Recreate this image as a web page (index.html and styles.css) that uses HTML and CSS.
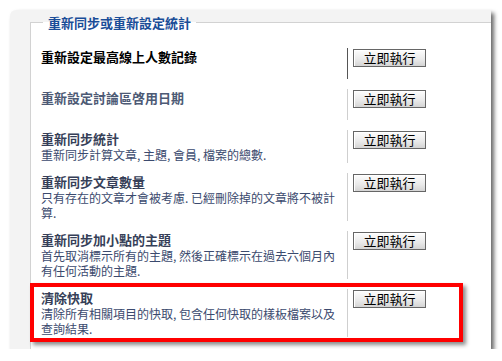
FILE: index.html
```html
<!DOCTYPE html>
<html lang="zh-Hant">
<head>
  <meta charset="UTF-8" />
  <meta name="viewport" content="width=device-width, initial-scale=1.0"/>
  <title>重新同步或重新設定統計</title>
  <link rel="stylesheet" href="styles.css">
</head>

<body>
  <div class="panel">
    <fieldset class="stats">
      <legend>重新同步或重新設定統計</legend>

      <div class="stat-row active">
        <div class="stat-info">
          <div class="stat-title">重新設定最高線上人數記錄</div>
          <div class="stat-desc"></div>
        </div>
        <div class="stat-action"><button class="run-btn">立即執行</button></div>
      </div>

      <div class="stat-row">
        <div class="stat-info">
          <div class="stat-title light">重新設定討論區啓用日期</div>
          <div class="stat-desc"></div>
        </div>
        <div class="stat-action"><button class="run-btn">立即執行</button></div>
      </div>

      <div class="stat-row">
        <div class="stat-info">
          <div class="stat-title">重新同步統計</div>
          <div class="stat-desc">重新同步計算文章, 主題, 會員, 檔案的總數.</div>
        </div>
        <div class="stat-action"><button class="run-btn">立即執行</button></div>
      </div>

      <div class="stat-row">
        <div class="stat-info">
          <div class="stat-title">重新同步文章數量</div>
          <div class="stat-desc">只有存在的文章才會被考慮. 已經刪除掉的文章將不被計算.</div>
        </div>
        <div class="stat-action"><button class="run-btn">立即執行</button></div>
      </div>

      <div class="stat-row">
        <div class="stat-info">
          <div class="stat-title">重新同步加小點的主題</div>
          <div class="stat-desc">首先取消標示所有的主題, 然後正確標示在過去六個月內有任何活動的主題.</div>
        </div>
        <div class="stat-action"><button class="run-btn">立即執行</button></div>
      </div>

      <div class="stat-row">
        <div class="stat-info">
          <div class="stat-title">清除快取</div>
          <div class="stat-desc">清除所有相關項目的快取, 包含任何快取的樣板檔案以及查詢結果.</div>
        </div>
        <div class="stat-action"><button class="run-btn">立即執行</button></div>
      </div>
    </fieldset>

    <div class="callout"></div>
  </div>
</body>
</html>
```

FILE: styles.css
```css
body {
  margin: 0;
  background: #fff;
  font-family: "Noto Sans CJK TC", "Liberation Sans", sans-serif;
}
.panel {
  position: relative;
  margin: 10px 0 0 10px;
  width: 481px;
  height: 339px;
  padding-top: 5px;
  box-sizing: border-box;
  background: #f3f3f3;
  border-top-left-radius: 6px;
  box-shadow: 3px 3px 4px rgba(0, 0, 0, 0.6);
  overflow: hidden;
}
.stats {
  margin: 0 -20px 0 20px;
  padding: 18px 10px 40px 10px;
  min-height: 400px;
  border: 1px solid #d2d2d2;
  background: #fff;
}
.stats legend {
  margin-left: 2px;
  padding: 0 5px;
  font-size: 13px;
  line-height: 15px;
  font-weight: bold;
  color: #1a4d98;
}
.stat-row {
  display: flex;
  margin-bottom: 10px;
}
.stat-info {
  width: 306px;
  padding: 1px 0;
}
.stat-title {
  font-size: 13px;
  line-height: 16px;
  font-weight: bold;
  color: #363f58;
}
.stat-title.light {
  color: #4d5a75;
}
.active .stat-title {
  color: #000;
}
.stat-desc {
  min-height: 13px;
  font-size: 12px;
  line-height: 15px;
  color: #3b4a6e;
}
.stat-action {
  border-left: 1px solid #cfcfcf;
  padding: 1px 0 0 5px;
}
.active .stat-action {
  border-left-color: #555;
}
.run-btn {
  display: block;
  width: 73px;
  height: 18px;
  padding: 0;
  font-family: inherit;
  font-size: 13px;
  line-height: 14px;
  color: #000;
  border: 1px solid #666;
  background: linear-gradient(#fdfdfd, #e9e9e9 60%, #d4d4d4);
  box-shadow: inset 1px 1px 0 #fff;
}
.callout {
  position: absolute;
  left: 20px;
  top: 273px;
  width: 425px;
  height: 51px;
  border: 4px solid #f00;
  box-shadow: 3px 3px 4px rgba(0, 0, 0, 0.45);
}
```
